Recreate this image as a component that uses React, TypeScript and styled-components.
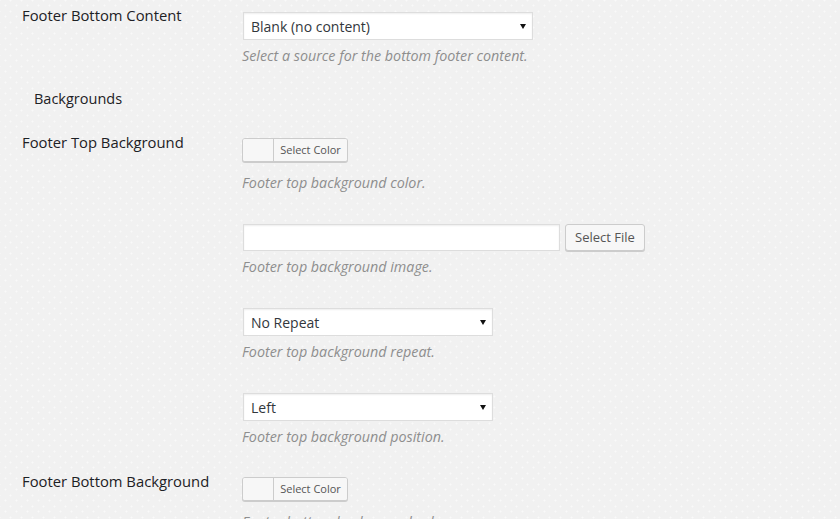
import React from 'react';
import styled, { createGlobalStyle } from 'styled-components';

const GlobalStyle = createGlobalStyle`
  html, body {
    margin: 0;
    padding: 0;
  }
  body {
    background-color: #f1f1f1;
    background-image:
      radial-gradient(circle, rgba(255, 255, 255, 0.55) 0.8px, transparent 1.2px),
      radial-gradient(circle, rgba(255, 255, 255, 0.55) 0.8px, transparent 1.2px);
    background-size: 11px 11px, 11px 11px;
    background-position: 0 0, 5px 6px;
    font-family: "Open Sans", "Liberation Sans", sans-serif;
    color: #23282d;
    overflow: hidden;
  }
`;

const Page = styled.div`
  width: 840px;
  height: 519px;
  padding-left: 22px;
  box-sizing: border-box;
`;

const Row = styled.div<{ $top: number }>`
  display: flex;
  align-items: flex-start;
  margin-top: ${(p) => p.$top}px;
`;

const Label = styled.div<{ $pad: number }>`
  width: 220px;
  flex: none;
  padding-top: ${(p) => p.$pad}px;
  font-size: 14.8px;
  line-height: 17px;
  font-weight: 400;
  color: #1d2125;
`;

const Field = styled.div<{ $pad: number }>`
  display: flex;
  flex-direction: column;
  padding-top: ${(p) => p.$pad}px;
`;

const Group = styled.div<{ $top: number }>`
  display: flex;
  flex-direction: column;
  margin-top: ${(p) => p.$top}px;
`;

const Heading = styled.div`
  margin: 23px 0 0 12px;
  font-size: 14.5px;
  line-height: 20px;
  font-weight: 400;
  color: #1d2125;
`;

const Description = styled.p<{ $top: number }>`
  margin: ${(p) => p.$top}px 0 0 0;
  font-size: 14.3px;
  line-height: 20px;
  font-style: italic;
  color: #8e8e8e;
`;

const SelectBox = styled.div<{ $width: number }>`
  position: relative;
  width: ${(p) => p.$width}px;
  height: 28px;
  margin-left: 1px;
  box-sizing: border-box;
  border: 1px solid #ddd;
  background: #fff;
  box-shadow: inset 0 1px 2px rgba(0, 0, 0, 0.07);
  display: flex;
  align-items: center;
  padding: 0 7px;
  font-size: 14px;
  color: #32373c;
`;

const Arrow = styled.span`
  position: absolute;
  right: 6px;
  top: 11px;
  width: 0;
  height: 0;
  border-left: 3px solid transparent;
  border-right: 3px solid transparent;
  border-top: 5px solid #111;
`;

const ColorButton = styled.div`
  display: flex;
  width: 106px;
  height: 24px;
  box-sizing: border-box;
  border: 1px solid #ccc;
  border-radius: 3px;
  background: #f7f7f7;
  box-shadow: 0 1px 0 #ccc;
  overflow: hidden;
`;

const Swatch = styled.span`
  width: 30px;
  flex: none;
  background: #f7f7f7;
`;

const ColorLabel = styled.span`
  flex: 1;
  border-left: 1px solid #ccc;
  background: #f7f7f7;
  font-size: 11px;
  line-height: 22px;
  color: #555;
  text-align: center;
`;

const InputRow = styled.div`
  display: flex;
  align-items: flex-start;
  gap: 5px;
`;

const TextInput = styled.div`
  width: 317px;
  height: 27px;
  margin-left: 1px;
  box-sizing: border-box;
  border: 1px solid #ddd;
  background: #fff;
  box-shadow: inset 0 1px 2px rgba(0, 0, 0, 0.07);
`;

const Button = styled.div`
  height: 27px;
  box-sizing: border-box;
  padding: 0 9px;
  border: 1px solid #ccc;
  border-radius: 3px;
  background: #f7f7f7;
  box-shadow: 0 1px 0 #ccc;
  font-size: 13px;
  line-height: 25px;
  color: #555;
`;

const Select = ({ value, width }: { value: string; width: number }) => (
  <SelectBox $width={width}>
    {value}
    <Arrow />
  </SelectBox>
);

const ColorPicker = () => (
  <ColorButton>
    <Swatch />
    <ColorLabel>Select Color</ColorLabel>
  </ColorButton>
);

export default function App() {
  return (
    <>
      <GlobalStyle />
      <Page>
        <Row $top={0}>
          <Label $pad={7}>Footer Bottom Content</Label>
          <Field $pad={12}>
            <Select value="Blank (no content)" width={290} />
            <Description $top={6}>Select a source for the bottom footer content.</Description>
          </Field>
        </Row>

        <Heading>Backgrounds</Heading>

        <Row $top={25}>
          <Label $pad={0}>Footer Top Background</Label>
          <Field $pad={4}>
            <ColorPicker />
            <Description $top={11}>Footer top background color.</Description>

            <Group $top={31}>
              <InputRow>
                <TextInput />
                <Button>Select File</Button>
              </InputRow>
              <Description $top={6}>Footer top background image.</Description>
            </Group>

            <Group $top={31}>
              <Select value="No Repeat" width={250} />
              <Description $top={6}>Footer top background repeat.</Description>
            </Group>

            <Group $top={31}>
              <Select value="Left" width={250} />
              <Description $top={6}>Footer top background position.</Description>
            </Group>
          </Field>
        </Row>

        <Row $top={26}>
          <Label $pad={0}>Footer Bottom Background</Label>
          <Field $pad={4}>
            <ColorPicker />
            <Description $top={11}>Footer bottom background color.</Description>
          </Field>
        </Row>
      </Page>
    </>
  );
}
